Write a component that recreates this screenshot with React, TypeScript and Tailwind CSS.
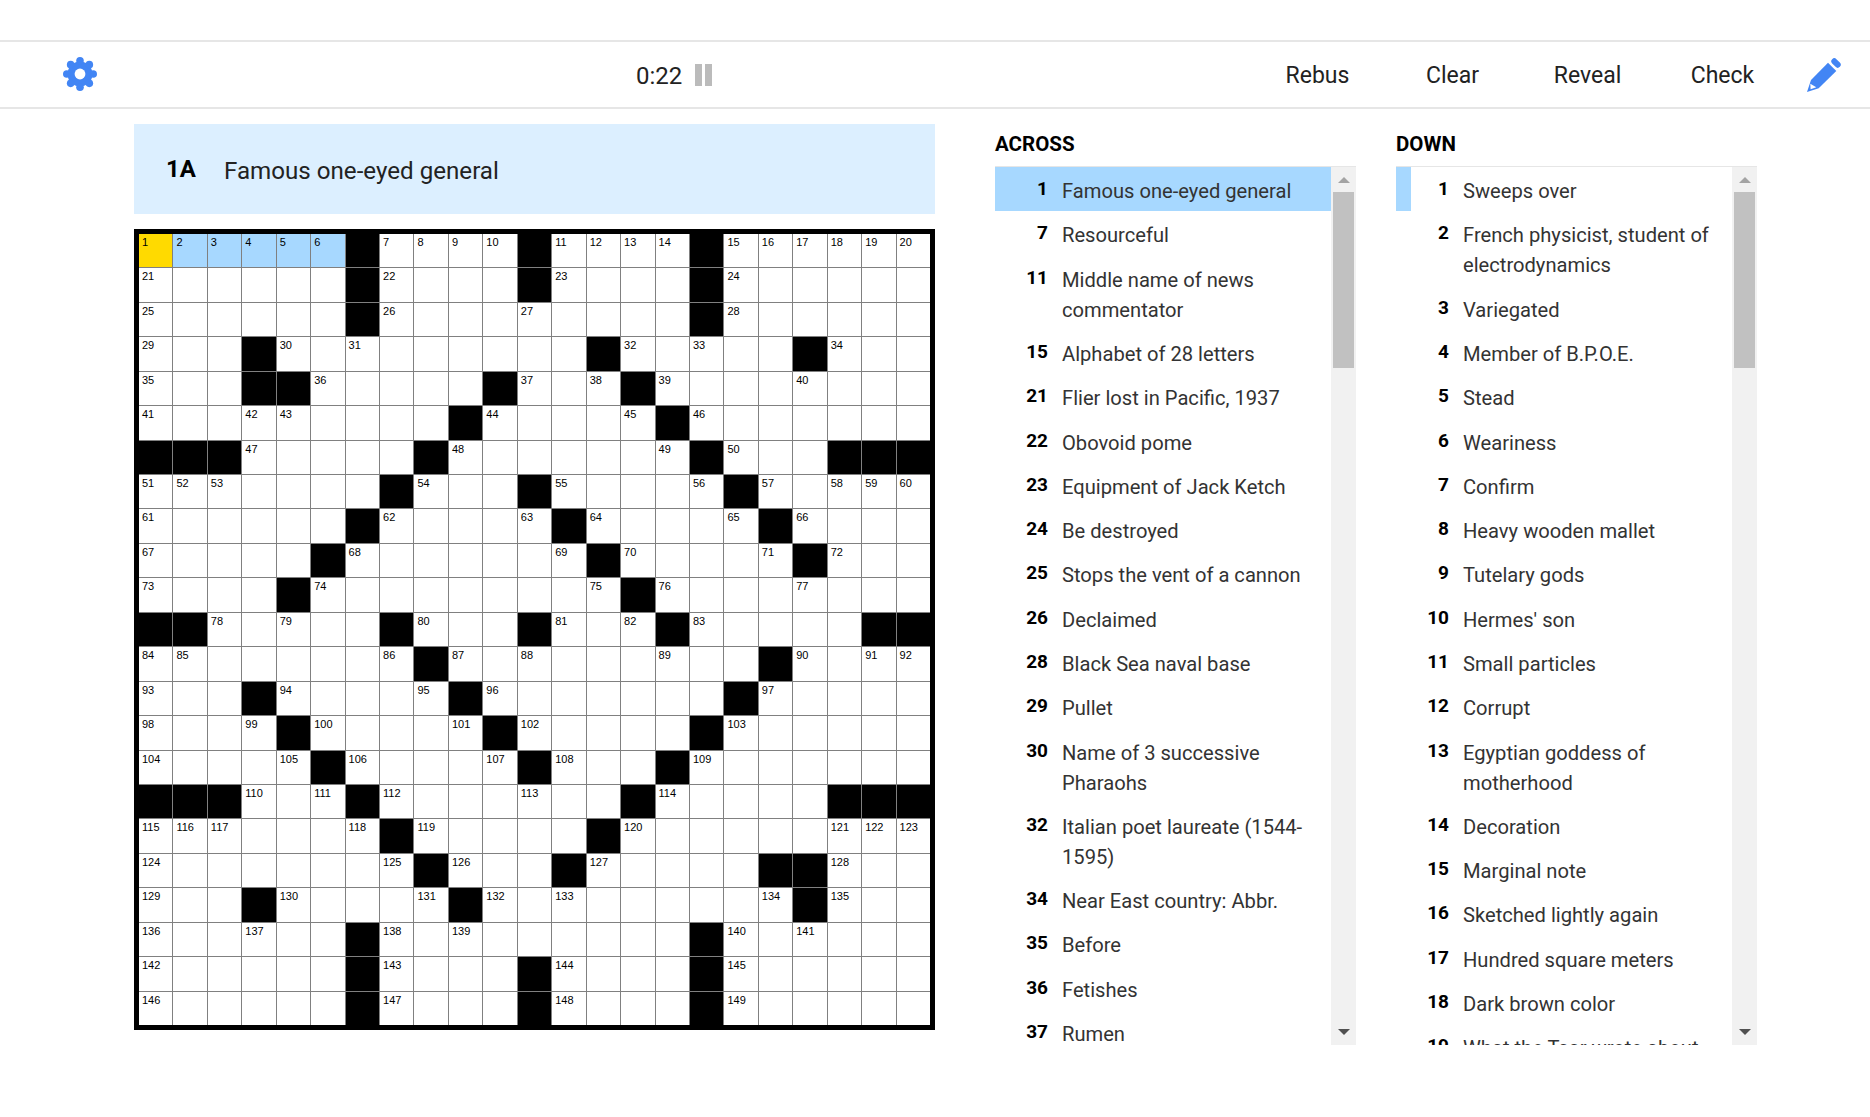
const PATTERN = [
  [6, 11, 16],
  [6, 11, 16],
  [6, 16],
  [3, 13, 19],
  [3, 4, 10, 14],
  [9, 15],
  [0, 1, 2, 8, 16, 20, 21, 22],
  [7, 11, 17],
  [6, 12, 18],
  [5, 13, 19],
  [4, 14],
  [0, 1, 7, 11, 15, 21, 22],
  [8, 18],
  [3, 9, 17],
  [4, 10, 16],
  [5, 11, 15],
  [0, 1, 2, 6, 14, 20, 21, 22],
  [7, 13],
  [8, 12, 18, 19],
  [3, 9, 19],
  [6, 16],
  [6, 11, 16],
  [6, 11, 16],
]

const SIZE = 23

type Clue = { n: number; text: string }

const ACROSS: Clue[] = [
  { n: 1, text: 'Famous one-eyed general' },
  { n: 7, text: 'Resourceful' },
  { n: 11, text: 'Middle name of news commentator' },
  { n: 15, text: 'Alphabet of 28 letters' },
  { n: 21, text: 'Flier lost in Pacific, 1937' },
  { n: 22, text: 'Obovoid pome' },
  { n: 23, text: 'Equipment of Jack Ketch' },
  { n: 24, text: 'Be destroyed' },
  { n: 25, text: 'Stops the vent of a cannon' },
  { n: 26, text: 'Declaimed' },
  { n: 28, text: 'Black Sea naval base' },
  { n: 29, text: 'Pullet' },
  { n: 30, text: 'Name of 3 successive Pharaohs' },
  { n: 32, text: 'Italian poet laureate (1544-1595)' },
  { n: 34, text: 'Near East country: Abbr.' },
  { n: 35, text: 'Before' },
  { n: 36, text: 'Fetishes' },
  { n: 37, text: 'Rumen' },
]

const DOWN: Clue[] = [
  { n: 1, text: 'Sweeps over' },
  { n: 2, text: 'French physicist, student of electrodynamics' },
  { n: 3, text: 'Variegated' },
  { n: 4, text: 'Member of B.P.O.E.' },
  { n: 5, text: 'Stead' },
  { n: 6, text: 'Weariness' },
  { n: 7, text: 'Confirm' },
  { n: 8, text: 'Heavy wooden mallet' },
  { n: 9, text: 'Tutelary gods' },
  { n: 10, text: "Hermes' son" },
  { n: 11, text: 'Small particles' },
  { n: 12, text: 'Corrupt' },
  { n: 13, text: 'Egyptian goddess of motherhood' },
  { n: 14, text: 'Decoration' },
  { n: 15, text: 'Marginal note' },
  { n: 16, text: 'Sketched lightly again' },
  { n: 17, text: 'Hundred square meters' },
  { n: 18, text: 'Dark brown color' },
  { n: 19, text: 'What the Tsar wrote about' },
]

function isBlack(r: number, c: number) {
  return PATTERN[r].includes(c)
}

function buildCells() {
  const cells: { key: string; black: boolean; num: number | null; r: number; c: number }[] = []
  let n = 0
  for (let r = 0; r < SIZE; r++) {
    for (let c = 0; c < SIZE; c++) {
      const black = isBlack(r, c)
      const starts = !black && (r === 0 || c === 0 || isBlack(r - 1, c) || isBlack(r, c - 1))
      if (starts) n++
      cells.push({ key: `${r}-${c}`, black, num: starts ? n : null, r, c })
    }
  }
  return cells
}

function GearIcon() {
  const lobes = [0, 45, 90, 135, 180, 225, 270, 315]
  return (
    <svg viewBox="0 0 34 34" className="h-[34px] w-[34px] -translate-y-[1px]">
      <circle cx="17" cy="17" r="12.5" fill="#4285f4" />
      {lobes.map(a => (
        <circle
          key={a}
          cx={17 + 13.2 * Math.cos((a * Math.PI) / 180 + Math.PI / 2)}
          cy={17 + 13.2 * Math.sin((a * Math.PI) / 180 + Math.PI / 2)}
          r="3.8"
          fill="#4285f4"
        />
      ))}
      <circle cx="17" cy="17" r="5.4" fill="#ffffff" />
    </svg>
  )
}

function PencilIcon() {
  return (
    <svg viewBox="0 0 34 34" className="h-[34px] w-[34px]">
      <polygon points="4,22 21,4.7 29.3,13 11.7,30.3 0,34" fill="#4285f4" />
      <polygon points="3.3,25.7 9.3,29.3 3.6,31.2" fill="#ffffff" />
      <path d="M27.3 3.3 L30.7 6.7" stroke="#4285f4" strokeWidth="6" strokeLinecap="round" />
    </svg>
  )
}

function Toolbar() {
  return (
    <div className="mt-10 flex h-[69px] items-center border-y-2 border-[#e6e6e6] pl-[63px] pr-[29px]">
      <GearIcon />
      <div className="ml-[539px] flex items-center">
        <span className="translate-y-[1px] text-[24px] text-[#222]">0:22</span>
        <div className="ml-[13px] flex gap-[3px]">
          <div className="h-[22px] w-[7px] bg-[#bbbbbb]" />
          <div className="h-[22px] w-[7px] bg-[#bbbbbb]" />
        </div>
      </div>
      <div className="ml-auto flex translate-y-[2px] text-[23px] text-[#222]">
        {['Rebus', 'Clear', 'Reveal', 'Check'].map(label => (
          <button key={label} className="w-[135px] text-center">
            {label}
          </button>
        ))}
      </div>
      <div className="ml-[17px]">
        <PencilIcon />
      </div>
    </div>
  )
}

function Board() {
  const cells = buildCells()
  return (
    <div className="grid h-[801px] w-[801px] grid-cols-[repeat(23,minmax(0,1fr))] grid-rows-[repeat(23,minmax(0,1fr))] gap-px border-[5px] border-black bg-[#808080]">
      {cells.map(({ key, black, num, r, c }) => {
        let bg = 'bg-white'
        if (black) bg = 'bg-black'
        else if (r === 0 && c === 0) bg = 'bg-[#ffda00]'
        else if (r === 0 && c < 6) bg = 'bg-[#a7d8ff]'
        return (
          <div
            key={key}
            className={`${bg} pl-[3px] pt-[3px] text-[11px] leading-[11px] text-black [font-family:'Liberation_Sans',sans-serif]`}
          >
            {num}
          </div>
        )
      })}
    </div>
  )
}

function ScrollBar() {
  return (
    <div className="flex w-[25px] shrink-0 flex-col items-center bg-[#f1f1f1]">
      <div className="flex h-[25px] w-full items-center justify-center">
        <div className="h-0 w-0 border-x-[6px] border-b-[6px] border-x-transparent border-b-[#a3a3a3]" />
      </div>
      <div className="h-[176px] w-[21px] bg-[#c1c1c1]" />
      <div className="flex-1" />
      <div className="flex h-[26px] w-full items-center justify-center">
        <div className="h-0 w-0 border-x-[6px] border-t-[6px] border-x-transparent border-t-[#505050]" />
      </div>
    </div>
  )
}

function ClueList({
  title,
  clues,
  selected,
}: {
  title: string
  clues: Clue[]
  selected: 'full' | 'strip'
}) {
  return (
    <div className="w-[361px]">
      <h3 className="h-[40px] pt-[3px] text-[20.5px] leading-[30px] font-bold text-black">{title}</h3>
      <div className="flex h-[879px] border-t border-[#e6e6e6]">
        <ul className="min-w-0 flex-1 overflow-hidden">
          {clues.map((clue, i) => {
            const first = i === 0
            const tone = first
              ? selected === 'full'
                ? 'border-[#a7d8ff] bg-[#a7d8ff]'
                : 'border-[#a7d8ff]'
              : 'border-transparent'
            return (
              <li key={clue.n} className={`flex border-l-[15px] py-[7.15px] pr-5 ${tone}`}>
                <span className="w-[38px] shrink-0 text-right text-[19px] leading-[30px] font-bold text-black">
                  {clue.n}
                </span>
                <span className="ml-[14px] translate-y-[2px] text-[20.15px] leading-[30px] text-[#333]">
                  {clue.text}
                </span>
              </li>
            )
          })}
        </ul>
        <ScrollBar />
      </div>
    </div>
  )
}

export default function App() {
  return (
    <div className="h-[1117px] overflow-hidden bg-white [font-family:Roboto,sans-serif]">
      <Toolbar />
      <div className="flex gap-[60px] pl-[134px] pt-[15px]">
        <div className="w-[801px]">
          <div className="mb-[15px] flex h-[90px] items-center bg-[#dcefff] pl-8">
            <span className="w-[58px] text-[24px] font-bold text-black">1A</span>
            <span className="translate-y-[2px] text-[24.15px] text-[#222]">Famous one-eyed general</span>
          </div>
          <Board />
        </div>
        <div className="flex gap-[40px] pt-[2px]">
          <ClueList title="ACROSS" clues={ACROSS} selected="full" />
          <ClueList title="DOWN" clues={DOWN} selected="strip" />
        </div>
      </div>
    </div>
  )
}
